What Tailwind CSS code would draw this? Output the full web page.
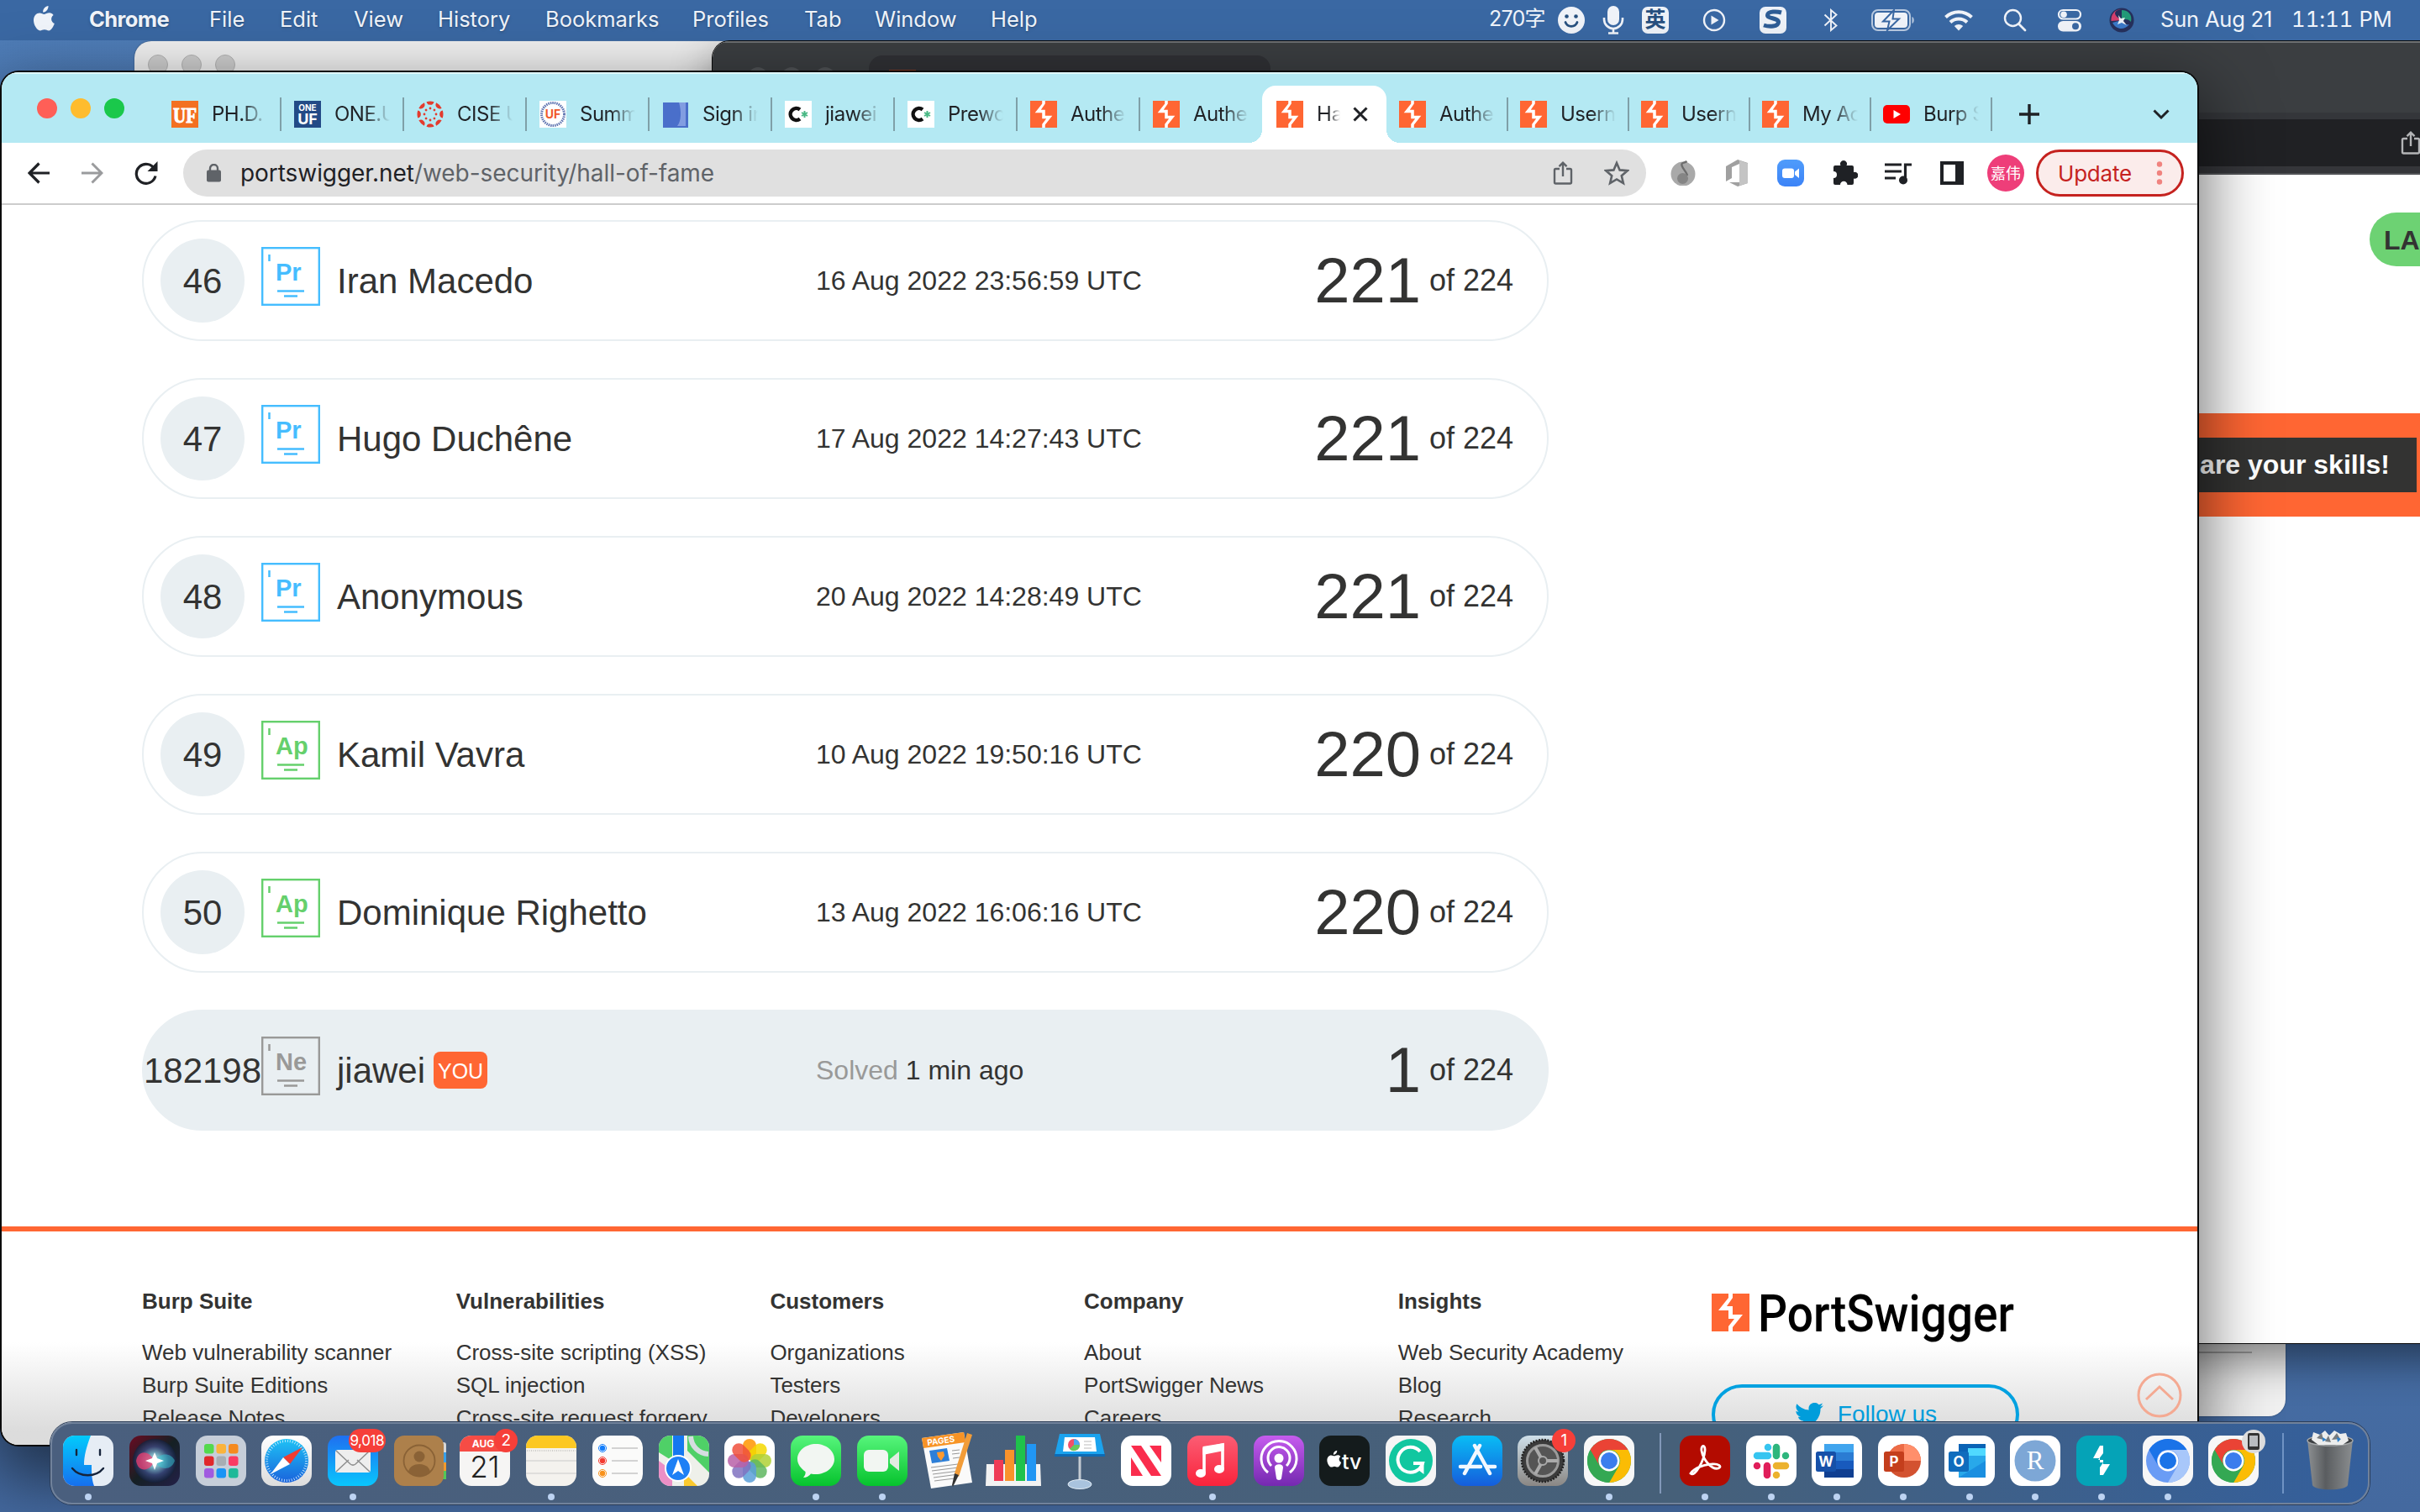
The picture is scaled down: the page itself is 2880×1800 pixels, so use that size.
<!DOCTYPE html>
<html lang="en">
<head>
<meta charset="utf-8">
<title>Hall of Fame</title>
<script src="https://cdn.jsdelivr.net/npm/@tailwindcss/browser@4"></script>
</head>
<body class="relative w-[2880px] h-[1800px] overflow-hidden bg-linear-to-b from-[#4f7db8] via-[#4a79b3] to-[#44699f] font-['Inter','Noto_Sans_CJK_SC',sans-serif]">

<svg class="absolute w-0 h-0">
  <defs>
    <linearGradient id="gBlue" x1="0" y1="0" x2="0" y2="1"><stop offset="0" stop-color="#1f6ff0"/><stop offset="1" stop-color="#09c6fd"/></linearGradient>
    <linearGradient id="gFinder" x1="0" y1="0" x2="0" y2="1"><stop offset="0" stop-color="#02cbfc"/><stop offset="1" stop-color="#1670ee"/></linearGradient>
    <linearGradient id="gGreen" x1="0" y1="0" x2="0" y2="1"><stop offset="0" stop-color="#57f57c"/><stop offset="1" stop-color="#06c32d"/></linearGradient>
    <linearGradient id="gWhite" x1="0" y1="0" x2="0" y2="1"><stop offset="0" stop-color="#ffffff"/><stop offset="1" stop-color="#dcdcdc"/></linearGradient>
    <linearGradient id="gSafari" x1="0" y1="0" x2="0" y2="1"><stop offset="0" stop-color="#1ec2f5"/><stop offset="1" stop-color="#1a63dc"/></linearGradient>
    <linearGradient id="gStore" x1="0" y1="0" x2="0" y2="1"><stop offset="0" stop-color="#09bdf5"/><stop offset="1" stop-color="#155ddc"/></linearGradient>
    <linearGradient id="gRed" x1="0" y1="0" x2="0" y2="1"><stop offset="0" stop-color="#fb5d74"/><stop offset="1" stop-color="#fa233b"/></linearGradient>
    <linearGradient id="gPurple" x1="0" y1="0" x2="0" y2="1"><stop offset="0" stop-color="#c65cee"/><stop offset="1" stop-color="#7429b0"/></linearGradient>
    <linearGradient id="gGray" x1="0" y1="0" x2="0" y2="1"><stop offset="0" stop-color="#cfe0ea"/><stop offset="1" stop-color="#8a8784"/></linearGradient>
    <linearGradient id="gZoom" x1="0" y1="0" x2="0" y2="1"><stop offset="0" stop-color="#4f9cfb"/><stop offset="1" stop-color="#3c83f7"/></linearGradient>
    <linearGradient id="gTrash" x1="0" y1="0" x2="1" y2="0"><stop offset="0" stop-color="#8d9092"/><stop offset=".4" stop-color="#5a5d60"/><stop offset="1" stop-color="#8b8e90"/></linearGradient>
    <radialGradient id="gSiri"><stop offset="0" stop-color="#ffffff"/><stop offset=".3" stop-color="#8fd5e8"/><stop offset=".65" stop-color="#3a4a80"/><stop offset="1" stop-color="#13203a"/></radialGradient>
    <linearGradient id="gSiriBg" x1="0" y1="0" x2="1" y2="1"><stop offset="0" stop-color="#6b0b22"/><stop offset=".5" stop-color="#152024"/><stop offset="1" stop-color="#232048"/></linearGradient>
    <symbol id="bolt" viewBox="0 0 45 45"><rect width="45" height="45" fill="#ff6633"/><path fill="#fff" d="M20 0h5v5l-7 10h7v10h12L25 40v5h-5v-6l7-9h-7V20H8L20 5z"/></symbol>
    <symbol id="share" viewBox="0 0 24 30"><path fill="none" stroke="currentColor" stroke-width="2.4" d="M8 10H3.500a1.500 1.500 0 0 0-1.500 1.500V26a1.500 1.500 0 0 0 1.500 1.500h17A1.500 1.500 0 0 0 22 26V11.500a1.500 1.500 0 0 0-1.500-1.500H16M12 19V3M7.500 7.200 12 2.600l4.500 4.600"/></symbol>
    <symbol id="apple" viewBox="0 0 28 34"><path fill="currentColor" d="M19.500 1c.2 2-.6 3.900-1.700 5.300-1.200 1.400-3 2.400-4.700 2.300-.2-1.900.7-3.900 1.800-5.100C16.100 2.100 18 1.100 19.500 1zM25.600 12c-3.800 2.600-3 8.300 1.200 10-1 2.900-3.600 8.400-6.700 8.400-2 0-2.700-1.200-5.200-1.200s-3.300 1.200-5.200 1.200C6.200 30.400 2 23.600 2 18.300c0-5.600 3.500-8.800 7.100-8.800 2.400 0 4 1.400 5.700 1.400 1.600 0 3.200-1.600 6.100-1.600 1.800 0 3.600.9 4.700 2.700z"/></symbol>
    <symbol id="chrome" viewBox="0 0 60 60"><rect width="60" height="60" rx="14" fill="#f7f7f7"/><circle cx="30" cy="30" r="26" fill="#34a853"/><path fill="#ea4335" d="M7.500 17A26 26 0 0 1 52.500 17H30a13 13 0 0 0-11.300 19.500z"/><path fill="#fbbc04" d="M52.500 17A26 26 0 0 1 30 56l11.300-19.500A13 13 0 0 0 30 17z"/><path fill="#34a853" d="M30 56A26 26 0 0 1 7.500 17l11.200 19.500A13 13 0 0 0 41.300 36.500z"/><circle cx="30" cy="30" r="12.500" fill="#fff"/><circle cx="30" cy="30" r="10" fill="#3b7ded"/></symbol>
  </defs>
</svg>

<!-- background window: light -->
<div class="absolute left-[160px] top-[49px] w-[2560px] h-[1637px] rounded-[20px] bg-[#f1f1f1] shadow-[0_0_2px_#0006]">
  <div class="flex gap-4 px-4 pt-4">
    <span class="size-6 rounded-full bg-[#cfcfcf] border border-[#b5b5b5]"></span>
    <span class="size-6 rounded-full bg-[#cfcfcf] border border-[#b5b5b5]"></span>
    <span class="size-6 rounded-full bg-[#cfcfcf] border border-[#b5b5b5]"></span>
  </div>
  <div class="mt-[1520px] mr-10 h-[2px] bg-[#b5b5b5]"></div>
</div>

<!-- background window: dark -->
<div class="absolute left-[848px] top-[49px] w-[2100px] h-[1550px] rounded-tl-[20px] bg-white shadow-[0_0_0_1px_#0a0a0a,0_20px_50px_#0007] overflow-hidden flex flex-col">
  <div class="h-[85px] shrink-0 bg-[#3b3e41] border-t-2 border-[#6d7073] flex gap-4 pl-[30px] pt-[29px]">
    <span class="size-6 rounded-full bg-[#505356] ml-[12px]"></span>
    <span class="size-6 rounded-full bg-[#505356]"></span>
    <span class="size-6 rounded-full bg-[#505356]"></span>
    <div class="-mt-[14px] ml-[24px] w-[478px] h-20 rounded-t-[16px] bg-[#303135] pl-[24px] pt-[17px]"><div class="size-8 bg-[#8a3c22]"></div></div>
  </div>
  <div class="h-2 shrink-0 bg-[#34363a]"></div>
  <div class="h-[56px] shrink-0 bg-[#202124] flex items-center justify-end pr-[67px] text-[#b4b5b7]"><svg class="w-6 h-[30px]"><use href="#share"/></svg></div>
  <div class="h-2 shrink-0 bg-[#35363a]"></div>
  <div class="h-[2px] shrink-0 bg-[#505255]"></div>
  <div class="mt-[45px] ml-[1972px] w-[200px] h-16 shrink-0 rounded-[32px] bg-[#6dd273] pl-[17px] font-['Liberation_Sans',sans-serif] font-bold text-[32px] leading-[66px] text-[#333332]">LA</div>
  <div class="mt-[175px] h-[123px] shrink-0 bg-[#ff6633] py-[29px] pr-[72px]">
    <div class="h-[65px] bg-[#333332] text-white text-right pr-[32px] font-['Liberation_Sans',sans-serif] font-bold text-[32px] leading-[64px]">are your skills!</div>
  </div>
</div>

<!-- menu bar -->
<header class="absolute inset-x-0 top-0 h-12 bg-[#3a68a3] text-[#f0f4fa] text-[25.500px] flex items-center">
  <div class="flex items-center pl-[38px] h-12 -mt-[2px] whitespace-nowrap text-shadow-md">
    <svg class="w-[28px] h-[34px] mr-10"><use href="#apple"/></svg>
    <span class="w-[143px] font-bold tracking-[-0.600px]">Chrome</span>
    <span class="w-[84px]">File</span>
    <span class="w-[88px]">Edit</span>
    <span class="w-[100px]">View</span>
    <span class="w-[128px]">History</span>
    <span class="w-[175px]">Bookmarks</span>
    <span class="w-[133px]">Profiles</span>
    <span class="w-[84px]">Tab</span>
    <span class="w-[138px]">Window</span>
    <span>Help</span>
  </div>
  <div class="ml-auto flex items-center h-12 pr-[34px] whitespace-nowrap">
    <span class="w-[82px] tracking-[-0.800px] text-[25px] -mt-[2px]">270字</span>
    <svg class="size-8" viewBox="0 0 32 32"><circle cx="16" cy="16" r="16" fill="#f0f3f9"/><circle cx="10.500" cy="11.500" r="2.300" fill="#27507f"/><circle cx="21.500" cy="11.500" r="2.300" fill="#27507f"/><path d="M9 18.500a7.500 7.500 0 0 0 14 0" fill="none" stroke="#27507f" stroke-width="2.800" stroke-linecap="round"/></svg>
    <svg class="ml-5 w-7 h-[34px]" viewBox="0 0 28 34"><rect x="7" y="0" width="14" height="23" rx="7" fill="#f0f3f9"/><path d="M3 14v2a11 11 0 0 0 22 0v-2M14 27v5M8 32.500h12" fill="none" stroke="#f0f3f9" stroke-width="2.600"/></svg>
    <span class="ml-5 size-8 rounded-[7px] bg-[#eef2f8] text-[#27507f] text-[25px] leading-[31px] text-center font-bold">英</span>
    <svg class="ml-10 size-7" viewBox="0 0 28 28"><circle cx="14" cy="14" r="12" fill="none" stroke="#f0f3f9" stroke-width="2.400"/><path d="m10.500 8.500 9 5.500-9 5.500z" fill="#f0f3f9"/></svg>
    <span class="ml-10 size-8 rounded-[7px] bg-[#eef2f8] flex items-center justify-center"><svg class="size-7" viewBox="0 0 28 28"><path d="M24 5c-5-1.500-16-2-16.500 3-.5 4.500 13.500 3 13 8.500-.5 5-10 6-17.500 3.500" fill="none" stroke="#2e5d96" stroke-width="5"/></svg></span>
    <svg class="ml-[43px] w-5 h-7" viewBox="0 0 20 28"><path d="m2.500 7.500 14 13L10 26V2l6.500 5.500-14 13" fill="none" stroke="#f0f3f9" stroke-width="1.900"/></svg>
    <svg class="ml-[38px] w-[52px] h-[26px]" viewBox="0 0 52 26"><rect x="1" y="1" width="45" height="24" rx="7" fill="none" stroke="#b8c9e0" stroke-width="2"/><rect x="4" y="4" width="39" height="18" rx="4" fill="#f0f3f9"/><path d="M48.500 9v8c3-1 3-7 0-8z" fill="#b8c9e0"/><path d="M27 1 14 14.500h7.500L19 25l14-13.500h-7.500z" fill="#f0f3f9" stroke="#3a68a3" stroke-width="2"/></svg>
    <svg class="ml-[34px] w-9 h-[26px]" viewBox="0 0 36 26"><path d="M2.500 9.500a22.500 22.500 0 0 1 31 0M8 15.500a14.500 14.500 0 0 1 20 0" fill="none" stroke="#f0f3f9" stroke-width="4"/><path d="M18 25.500 12.800 20a7.500 7.500 0 0 1 10.400 0z" fill="#f0f3f9"/></svg>
    <svg class="ml-[35px] size-7" viewBox="0 0 28 28"><circle cx="11.500" cy="11.500" r="9.500" fill="none" stroke="#f0f3f9" stroke-width="2.400"/><path d="m18.500 18.500 7.500 7.500" stroke="#f0f3f9" stroke-width="2.800" stroke-linecap="round"/></svg>
    <svg class="ml-9 w-[30px] h-7" viewBox="0 0 30 28"><rect x="2" y="2" width="26" height="10.500" rx="5.200" fill="none" stroke="#f0f3f9" stroke-width="2.200"/><circle cx="8" cy="7.200" r="3.800" fill="#f0f3f9"/><rect x="1" y="15" width="28" height="12.500" rx="6.200" fill="#f0f3f9"/><circle cx="22" cy="21.200" r="4" fill="#3a68a3"/></svg>
    <svg class="ml-8 size-[30px]" viewBox="0 0 30 30"><circle cx="15" cy="15" r="14.500" fill="#26305c"/><path d="M15 15C3 8 6 3 15 2c-9 0-13 7-12.500 14z" fill="#d23f6d"/><path d="M15 3c8 0 13 6 11 14-4-4-8-3-11-2z" fill="#239a78"/><path d="M4 18c4 8 14 10 20 2-6 2-9-5-9-5z" fill="#3a78c8"/><path d="m11 9 3 4 5-1-2 4 4 5-6-3-5 2 2-5z" fill="#fff" opacity=".9"/></svg>
    <span class="ml-[31px] w-[156px] -mt-[2px] tracking-[-0.200px]">Sun Aug 21</span>
    <span class="w-[119px] -mt-[2px] tabular-nums tracking-[0.100px]">11:11 PM</span>
  </div>
</header>

<!-- browser window -->
<main class="absolute left-[2px] top-[86px] w-[2613px] h-[1634px] rounded-[20px] bg-white overflow-hidden flex flex-col shadow-[0_0_0_2px_#0b0b0b,0_30px_80px_10px_rgba(0,0,0,.55)]">
  <!-- tab strip -->
  <div class="h-[84px] shrink-0 bg-[#b4e9f3] border-t-2 border-[#dff8fc] flex items-end">
    <div class="flex gap-4 pl-[42px] w-[187px] mb-[29px]">
      <span class="size-6 rounded-full bg-[#ff5f57]"></span>
      <span class="size-6 rounded-full bg-[#febc2e]"></span>
      <span class="size-6 rounded-full bg-[#1ac84b]"></span>
    </div>
    <nav id="tabs" class="flex items-end text-[24px] text-[#1f2125]"></nav>
    <svg class="ml-[32px] mb-[22px] size-6" viewBox="0 0 24 24"><path d="M12 0v24M0 12h24" stroke="#1f2125" stroke-width="3.400"/></svg>
    <svg class="ml-[135px] mb-[27px] w-5 h-[14px]" viewBox="0 0 20 14"><path d="m1.500 2.500 8.500 8.500 8.500-8.500" fill="none" stroke="#1f2125" stroke-width="3"/></svg>
  </div>
  <!-- toolbar -->
  <div class="h-[74px] shrink-0 border-b-2 border-[#cccccc] flex items-center text-[#1f2125]">
    <svg class="ml-[31px] size-[26px]" viewBox="0 0 26 26"><path d="M26 13H3M13.500 1.500 2 13l11.500 11.500" fill="none" stroke="#1f2125" stroke-width="3.200"/></svg>
    <svg class="ml-[38px] size-[26px]" viewBox="0 0 26 26"><path d="M0 13h23M12.500 1.500 24 13 12.500 24.500" fill="none" stroke="#9a9b9d" stroke-width="3"/></svg>
    <svg class="ml-[37px] size-7" viewBox="0 0 28 28"><path d="M24 9.500A11.500 11.500 0 1 0 25 17.500" fill="none" stroke="#1f2125" stroke-width="3.200"/><path d="M27.500 0v12h-12z" fill="#1f2125"/></svg>
    <div class="ml-[30px] w-[1741px] h-14 rounded-full bg-[#e0e0e0] flex items-center pl-[28px] pr-5 text-[#5f6368]">
      <svg class="w-[17px] h-[22px]" viewBox="0 0 17 22"><rect y="7.500" width="17" height="14" rx="2" fill="#5f6368"/><path d="M4 9V5.500a4.500 4.500 0 0 1 9 0V9" fill="none" stroke="#5f6368" stroke-width="2.400"/></svg>
      <span class="ml-[23px] text-[28px] tracking-[-0.060px] leading-[56px] whitespace-nowrap"><span class="text-[#1f2125]">portswigger.net</span>/web-security/hall-of-fame</span>
      <svg class="ml-auto w-6 h-[30px]"><use href="#share"/></svg>
      <svg class="ml-[37px] size-[30px]" viewBox="0 0 30 30"><path d="m15 3 3.600 8.400 9.100.8-6.900 6 2.100 8.900L15 22.400l-7.900 4.700 2.100-8.900-6.900-6 9.100-.8z" fill="none" stroke="#5f6368" stroke-width="2.600"/></svg>
    </div>
    <svg class="ml-[29px] size-[30px]" viewBox="0 0 30 30"><circle cx="15" cy="16" r="14.500" fill="#a9a9a9"/><path d="M19.500 1c-3 2.500-7 1-6 5 1 4 6 8 6.500 12" fill="none" stroke="#6d6d6d" stroke-width="2.400"/><circle cx="14.500" cy="21.500" r="6.500" fill="#858585"/></svg>
    <svg class="ml-[36px] w-[26px] h-8" viewBox="0 0 26 32"><path d="M0 8 14 0l12 4v24l-12 4-10-5h12V5L7 9v13l-7 4z" fill="#a0a0a0"/><path d="m16 1 10 3.500V28l-10 3z" fill="#c4c4c4"/></svg>
    <svg class="ml-[35px] size-8" viewBox="0 0 32 32"><rect width="32" height="32" rx="9" fill="url(#gZoom)"/><rect x="6" y="10.500" width="14" height="11.500" rx="3" fill="#fff"/><path d="m21 14.500 5-4v11.500l-5-4z" fill="#fff"/></svg>
    <svg class="ml-[34px] size-[30px]" viewBox="0 0 30 30"><path fill="#1f2125" d="M1 8a2 2 0 0 1 2-2h6.500a4 4 0 1 1 7 0H23a2 2 0 0 1 2 2v6a4 4 0 1 1 0 7.500V27a2 2 0 0 1-2 2h-5.500a4.200 4.200 0 0 0-8.500 0H3a2 2 0 0 1-2-2v-6a4 4 0 0 0 0-8z"/></svg>
    <svg class="ml-8 w-8 h-7" viewBox="0 0 32 28"><path d="M0 4h20M0 12h20M0 20h13M24.500 22V4H32" fill="none" stroke="#1f2125" stroke-width="3.200"/><circle cx="22" cy="22.500" r="5" fill="#1f2125"/></svg>
    <svg class="ml-[34px] size-7" viewBox="0 0 28 28"><path fill="#1f2125" fill-rule="evenodd" d="M0 0h28v28H0zM4 4v20h14V4z"/></svg>
    <span class="ml-7 size-11 rounded-full bg-[#ee3e79] text-white text-[18px] leading-[43px] text-center font-['Noto_Sans_CJK_SC',sans-serif]">嘉伟</span>
    <div class="ml-[14px] w-[176px] h-14 rounded-full border-3 border-[#c5221f] bg-[#fbeceb] flex items-center pl-[23px] text-[#c5221f]">
      <span class="text-[26px] tracking-[-0.200px]">Update</span>
      <svg class="ml-[29px] w-2 h-7" viewBox="0 0 8 28"><circle cx="4" cy="3.500" r="3.200" fill="#f0837f"/><circle cx="4" cy="14" r="3.200" fill="#f0837f"/><circle cx="4" cy="24.500" r="3.200" fill="#f0837f"/></svg>
    </div>
  </div>
  <!-- page -->
  <section id="rows" class="pt-[18px] pl-[167px] flex flex-col gap-11 shrink-0 font-['Liberation_Sans',sans-serif] text-[#333332]"></section>
  <footer class="mt-[114px] h-[270px] shrink-0 border-t-6 border-[#ff6633] bg-linear-to-b from-white from-50% to-[#dcdcdc] to-90% pt-[64px] pl-[167px] flex relative font-['Liberation_Sans',sans-serif] text-[26px] text-[#333332]">
    <div id="links" class="flex"></div>
    <div>
      <svg class="mt-[10px] w-[366px] h-[66px]" viewBox="0 0 366 66"><use href="#bolt" width="45" height="45"/><text x="55" y="45" textLength="305" lengthAdjust="spacingAndGlyphs" font-family="Roboto, sans-serif" font-weight="500" font-size="62" fill="#000">PortSwigger</text></svg>
      <div class="mt-[42px] w-[366px] h-[72px] rounded-[36px] border-4 border-[#00a1e0] text-[#009ddb] text-[28px] flex items-center justify-center gap-[17px]">
        <svg class="w-[34px] h-7" viewBox="0 0 34 28"><path fill="currentColor" d="M34 3.300a14 14 0 0 1-4 1.100 7 7 0 0 0 3-3.900 14 14 0 0 1-4.400 1.700 7 7 0 0 0-11.900 6.400A20 20 0 0 1 2.400 1.300a7 7 0 0 0 2.200 9.300 7 7 0 0 1-3.200-.9c0 3.500 2.400 6.200 5.600 6.900a7 7 0 0 1-3.100.1 7 7 0 0 0 6.500 4.900A14 14 0 0 1 0 24.500 20 20 0 0 0 10.700 27.600c13 0 20.200-10.900 19.800-20.700A14 14 0 0 0 34 3.300z"/></svg>
        <span>Follow us</span>
      </div>
    </div>
    <svg class="absolute left-[2540px] top-[167px] size-14" viewBox="0 0 56 56"><circle cx="28" cy="28" r="25" fill="none" stroke="#f4a992" stroke-width="3"/><path d="m12 33 16-15 16 15" fill="none" stroke="#f4a992" stroke-width="3"/></svg>
  </footer>
</main>

<!-- dock -->
<div class="absolute left-[60px] top-[1693px] w-[2760px] h-[98px] rounded-[26px] border-2 border-[#71829b] shadow-[0_0_0_1px_#2b3d58] bg-linear-to-r from-[#4a5f7e] via-[#466079] via-70% to-[#345f9c] flex items-start pt-[14px] pl-[4px]">
  <div id="dock" class="flex"></div>
  <div class="ml-[20px] -mt-[3px] w-[2px] h-[72px] shrink-0 bg-[#8298b8]"></div>
  <div id="dock2" class="flex ml-[13px]"></div>
  <div class="ml-[18px] -mt-[3px] w-[2px] h-[72px] shrink-0 bg-[#6f93c4]"></div>
  <svg class="ml-[27px] -mt-[7px] w-[56px] h-[72px] shrink-0" viewBox="0 0 56 72"><path d="M1 12h54l-6 54c-2 7-40 7-42 0z" fill="url(#gTrash)"/><ellipse cx="28" cy="13" rx="27" ry="6" fill="#3d4043" stroke="#a4a7a9" stroke-width="1.500"/><path d="m6 12 2-9 8 3 6-5 5 6 6-6 7 4 7-1 3 9-7 5H14z" fill="#eceded"/><path d="m12 10 6-6 2 8zM30 12l6-8 4 7zM22 14l4-7 3 8z" fill="#777b7e"/><path d="m36 9 5 2-4 4zM19 9l5 3-5 2z" fill="#2f80c8"/></svg>
</div>

<script>
const use = (id, cls) => `<svg class="${cls}"><use href="#${id}"/></svg>`;
const bolt = use('bolt', 'size-8 shrink-0');
const fav = inner => `<svg class="size-8 shrink-0" viewBox="0 0 32 32">${inner}</svg>`;
const txt = (x, y, s, fill, t, extra = '') => `<text x="${x}" y="${y}" font-size="${s}" fill="${fill}" text-anchor="middle" font-weight="700" ${extra}>${t}</text>`;
const canvasPath = Array.from({length: 8}, (_, i) => `<g transform="rotate(${i * 45} 16 16)"><path d="M11.500 1.200a15.500 15.500 0 0 1 9 0a4.600 4.600 0 0 1-9 0z" fill="#e33b2e"/><circle cx="16" cy="9" r="1.400" fill="#e33b2e"/></g>`).join('');
const cIcon = fav(`<rect width="32" height="32" fill="#fff"/><path d="M18 10.500a7 7 0 1 0 0 11" fill="none" stroke="#111" stroke-width="4.500"/><path d="M23.500 12v8M20 14l7 4M27 14l-7 4" stroke="#49b884" stroke-width="2"/>`);
const tabs = [
  [fav(`<rect width="32" height="32" fill="#f37021"/>${txt(16, 26, 26, '#fff', 'UF', 'font-family="Liberation Serif" textLength="28" lengthAdjust="spacingAndGlyphs" stroke="#fff" stroke-width="1"')}`), 'PH.D.'],
  [fav(`<rect width="32" height="32" fill="#234a86"/>${txt(16, 12, 10, '#fff', 'ONE')}${txt(16, 28, 18, '#fff', 'UF')}`), 'ONE.U'],
  [fav(canvasPath), 'CISE U'],
  [fav(`<rect width="32" height="32" fill="#fff"/><circle cx="16" cy="16" r="13.500" fill="none" stroke="#5a70ae" stroke-width="3" stroke-dasharray="1.500 1"/>${txt(16, 21, 14, '#f0592a', 'UF')}`), 'Summer'],
  [fav(`<rect x="1" y="2" width="30" height="30" fill="#4a6fca"/><path d="M20 2h8v28H18c5-6 5-18 2-28z" fill="#a9bdf0" opacity=".6"/>`), 'Sign in'],
  [cIcon, 'jiawei'], [cIcon, 'Prewor'], [bolt, 'Authen'], [bolt, 'Authen'], [bolt, 'Hall'],
  [bolt, 'Authen'], [bolt, 'Userna'], [bolt, 'Userna'], [bolt, 'My Acc'],
  [fav('<rect y="5" width="32" height="22" rx="5" fill="#f00"/><path d="m12.500 11 8.500 5-8.500 5z" fill="#fff"/>'), 'Burp Su'],
];
document.getElementById('tabs').innerHTML = tabs.map(([icon, label], i) => {
  const text = `<span class="ml-4 w-[66px] overflow-hidden whitespace-nowrap tracking-[-0.500px] leading-8 mask-r-from-55% mask-r-to-100%">${label}</span>`;
  if (i === 9) return `<div class="relative w-[148px] h-[68px] -ml-px mr-px rounded-t-[16px] bg-white flex items-center pl-[17px] before:absolute before:-left-4 before:bottom-0 before:size-4 before:bg-radial-[at_0%_0%] before:from-transparent before:from-[16px] before:to-white before:to-[16px] after:absolute after:-right-4 after:bottom-0 after:size-4 after:bg-radial-[at_100%_0%] after:from-transparent after:from-[16px] after:to-white after:to-[16px]">${icon}<span class="ml-4 w-7 overflow-hidden whitespace-nowrap mask-r-from-50% mask-r-to-100%">${label}</span><svg class="ml-[15px] size-[18px]" viewBox="0 0 18 18"><path d="m1.500 1.500 15 15M16.500 1.500l-15 15" stroke="#1f2125" stroke-width="3"/></svg></div>`;
  if (i > 9) return `<div class="w-[144px] h-[68px] flex items-center pl-[14px]">${icon}${text}<span class="ml-auto w-[2px] h-10 bg-[#7fa0a8]"></span></div>`;
  return `<div class="w-[146px] h-[68px] flex items-center pl-[15px]">${icon}${text}<span class="ml-auto w-[2px] h-10 ${i === 8 ? 'bg-transparent' : 'bg-[#7fa0a8]'}"></span></div>`;
}).join('');

const badge = (color, t) => `<svg class="size-[70px] shrink-0 mb-[10px]" viewBox="0 0 70 70"><rect x="1.200" y="1.200" width="67.600" height="67.600" fill="none" stroke="${color}" stroke-width="2.400"/><path d="M9.500 9v8M19 52.500h32M27 58.500h16" stroke="${color}" stroke-width="2.500"/><text x="17" y="40" font-size="29" font-weight="700" fill="${color}">${t}</text></svg>`;
const rows = [
  [46, 'Pr', 'Iran Macedo', '16 Aug 2022 23:56:59 UTC', 221],
  [47, 'Pr', 'Hugo Duchêne', '17 Aug 2022 14:27:43 UTC', 221],
  [48, 'Pr', 'Anonymous', '20 Aug 2022 14:28:49 UTC', 221],
  [49, 'Ap', 'Kamil Vavra', '10 Aug 2022 19:50:16 UTC', 220],
  [50, 'Ap', 'Dominique Righetto', '13 Aug 2022 16:06:16 UTC', 220],
  [182198, 'Ne', 'jiawei', '1 min ago', 1],
];
const colors = {Pr: '#45bdff', Ap: '#65d06c', Ne: '#999998'};
document.getElementById('rows').innerHTML = rows.map(([rank, lvl, name, date, score]) => {
  const me = rank > 50;
  return `<div class="w-[1674px] h-36 rounded-full border-2 border-[#e9eff2] ${me ? 'bg-[#e9eff2]' : 'bg-white'} flex items-center pr-[38px] whitespace-nowrap">
    <div class="ml-5 size-[100px] shrink-0 rounded-full bg-[#e9eff2] text-[42px] flex items-center justify-center">${rank}</div>
    <div class="ml-5 flex items-center">${badge(colors[lvl], lvl)}</div>
    <div class="ml-5 w-[570px] text-[42px] flex items-center">${name}${me ? '<span class="ml-[10px] h-11 w-16 rounded-lg bg-[#ff6633] text-white text-[25px] leading-[46px] text-center">YOU</span>' : ''}</div>
    <div class="text-[32px]">${me ? '<span class="text-[#999998]">Solved</span> ' : ''}${date}</div>
    <div class="ml-auto flex items-center"><span class="text-[76px] leading-[100px]">${score}</span><span class="ml-[10px] w-[102px] text-[36px]">of 224</span></div>
  </div>`;
}).join('');

const cols = [
  ['Burp Suite', 'Web vulnerability scanner', 'Burp Suite Editions', 'Release Notes'],
  ['Vulnerabilities', 'Cross-site scripting (XSS)', 'SQL injection', 'Cross-site request forgery'],
  ['Customers', 'Organizations', 'Testers', 'Developers'],
  ['Company', 'About', 'PortSwigger News', 'Careers'],
  ['Insights', 'Web Security Academy', 'Blog', 'Research'],
];
document.getElementById('links').innerHTML = cols.map(([h, ...l]) =>
  `<div class="w-[373.700px] leading-[39px]"><div class="font-bold mb-[22px]">${h}</div>${l.map(t => `<div>${t}</div>`).join('')}</div>`).join('');

const sq = fill => `<rect width="60" height="60" rx="14" fill="${fill}"/>`;
const petals = ['#ff9500', '#f5d800', '#b0d136', '#5fb760', '#5a9fd8', '#8072c0', '#b860a8', '#f0503c'].map((c, i) => `<rect x="22" y="4" width="16" height="25" rx="8" fill="${c}" opacity=".85" transform="rotate(${i * 45} 30 30)"/>`).join('');
const pad = ['#53d94d', '#fab33c', '#f58a1f', '#e0282c', '#a7adb3', '#fb3b63', '#a05be0', '#1a94f5', '#1fb999'].map((c, i) => `<rect x="${10 + i % 3 * 14.5}" y="${10 + Math.floor(i / 3) * 14.5}" width="11.500" height="11.500" rx="3" fill="${c}"/>`).join('');
const doc = (x, c, l) => `<rect x="${x}" y="19" width="24" height="24" rx="2.500" fill="${c}"/>${txt(x + 12, 37, 17, '#fff', l)}`;
const apps = [
  [sq('#e6edf5') + '<path d="M14 0h19c-5 13-8 24-8 35h9c0 9 0 17 3 25H14A14 14 0 0 1 0 46V14A14 14 0 0 1 14 0z" fill="url(#gFinder)"/><path d="M16 17v6M44 17v6M11 39c9 11 28 11 37 0" fill="none" stroke="#16243b" stroke-width="2.400" stroke-linecap="round"/>', 1],
  [sq('url(#gSiriBg)') + '<circle cx="30" cy="30" r="26" fill="url(#gSiri)" opacity=".8"/><path d="M8 30c2-12 14-14 22 0-6 14-20 14-22 0z" fill="#ef3f72" opacity=".75"/><path d="M30 30c6-10 20-10 24 0-4 12-18 12-24 0z" fill="#32c8d6" opacity=".5"/><path d="M30 20l3 7 8 3-8 3-3 8-3-8-8-3 8-3z" fill="#fff"/>'],
  [sq('#c6ced9') + pad],
  [sq('url(#gWhite)') + '<circle cx="30" cy="30" r="26" fill="url(#gSafari)"/><circle cx="30" cy="30" r="23.500" fill="none" stroke="#d8f0ff" stroke-width="3" stroke-dasharray=".8 2.200"/><path d="M49 14 34 34l-8-8z" fill="#f23c30"/><path d="M11 46 26 26l8 8z" fill="#fff"/>'],
  [sq('url(#gBlue)') + '<rect x="9" y="17" width="42" height="27" rx="3" fill="#eee"/><path d="m10 43 15-14M50 43 35 29M10 18l17 16c2 1.500 4 1.500 6 0l17-16" fill="none" stroke="#8e8e8e" stroke-width="1.500"/>', 1, '9,018'],
  ['<rect x="50" y="8" width="12" height="44" rx="3" fill="#d8d8d8"/><rect x="52" y="20" width="10" height="12" fill="#3aa0e8"/><rect x="52" y="32" width="10" height="10" fill="#f29a2e"/><rect x="52" y="42" width="10" height="10" fill="#54c858"/><rect width="59" height="60" rx="12" fill="#ad804b"/><circle cx="30" cy="30" r="18.500" fill="none" stroke="#8a6236" stroke-width="1.800"/><circle cx="30" cy="25" r="6.500" fill="#8a6236"/><path d="M17 43c2-12 24-12 26 0-7 7-19 7-26 0z" fill="#8a6236"/>'],
  [sq('#f6f5f4') + '<path d="M0 19v-5A14 14 0 0 1 14 0h32a14 14 0 0 1 14 14v5z" fill="#f64c45"/>' + txt(28, 14, 12, '#fff', 'AUG') + '<text x="30" y="50" font-size="35" fill="#222" text-anchor="middle" font-weight="300">21</text>', 0, '2'],
  [sq('#f4f2ee') + '<path d="M0 15v-1A14 14 0 0 1 14 0h32a14 14 0 0 1 14 14v1z" fill="#fcc823"/><path d="M0 30h60M0 45h60" stroke="#d8d8d6" stroke-width="1.500"/><path d="M1 18h58" stroke="#c0c0be" stroke-width="1.500" stroke-dasharray="1 1.500"/>', 1],
  [sq('#fbfbfa') + [['#147efb', 15], ['#f33a30', 30], ['#f8921c', 45]].map(([c, y]) => `<circle cx="12" cy="${y}" r="4.500" fill="#fff" stroke="${c}" stroke-width="1"/><circle cx="12" cy="${y}" r="3.200" fill="${c}"/><path d="M23 ${y}h31" stroke="#c6c6c6" stroke-width="1.500"/>`).join('')],
  [sq('#eef0ea') + '<path d="M14 0h2v30L0 20v-6A14 14 0 0 1 14 0zM34 0h12a14 14 0 0 1 14 14v30L34 18z" fill="#4fd067"/><path d="M0 30 16 42v18h-2A14 14 0 0 1 0 46z" fill="#ec8fc6"/><path d="M30 60V44l16 16z" fill="#fbc92e"/><path d="M17 0h13v30H17z" fill="#1478f0"/><path d="M59 22A22 22 0 0 1 38 1" fill="none" stroke="#d6dde0" stroke-width="6"/><circle cx="23" cy="39" r="15" fill="#1e80f5" stroke="#fff" stroke-width="2"/><path d="m23 28 7 19-7-5-7 5z" fill="#fff"/>'],
  [sq('#fff') + petals],
  [sq('url(#gGreen)') + '<path d="M30 10c12 0 22 8 22 18s-10 18-22 18c-2 0-4 0-6-.6C22 48 19 50 15 50c2-2 3-5 2.500-7C12 39 8 34 8 28c0-10 10-18 22-18z" fill="#f2f6f2"/>', 1],
  [sq('url(#gGreen)') + '<rect x="8" y="17" width="29" height="26" rx="6" fill="#f2f6f2"/><path d="m39 28 11-9v23l-11-9z" fill="#e2ebe2"/>', 1],
  ['<path d="m-1 3 50-7 10 60-49 7z" fill="#fafafa"/><path d="m-1 3 50-7 2 12-50 7z" fill="#f79325"/><text x="6" y="12" font-size="10" font-weight="700" fill="#fff" transform="rotate(-8 6 12)">PAGES</text><path d="m8 18 21-3 3 15-21 3z" fill="#2d7fd8"/><path d="m17 20 8-1 1 5-4 6-4-5z" fill="#ff9a2e"/><path d="m10 38 32-4M11 42l32-4M12 46l32-4M13 50l30-4M14 54l24-3M35 18l9-1M35 22l9-1M36 27l8-1" stroke="#9a9a9a" stroke-width="1.200"/><path d="m53-3 6 2-16 50-5-4z" fill="#f29c38"/><path d="m38 45 5 2-7 14-1-2z" fill="#333"/>'],
  ['<path d="M-3 34h64l1 26H-4z" fill="#f2f2f2"/><rect x="6" y="29" width="11" height="25" fill="#ef3b55"/><rect x="19" y="17" width="11" height="37" fill="#f9932b"/><rect x="32" y="0" width="11" height="54" fill="#1fc24b"/><rect x="45" y="10" width="11" height="44" fill="#2196f3"/>'],
  ['<path d="M5-2h48l6 26H-1z" fill="#1ba3ee"/><path d="M-1 22h60v3H-1z" fill="#0d6bb5"/><path d="M11 2h36l2 17H9z" fill="#fff"/><circle cx="22" cy="11" r="7" fill="#f0506a"/><path d="M22 11V4a7 7 0 0 1 7 7z" fill="#4aa8f0"/><path d="M22 11h7a7 7 0 0 1-12 5z" fill="#63c95f"/><path d="M34 7h9M34 11h9M34 15h9" stroke="#bbb"/><path d="M29 25v32" stroke="#c4cbd2" stroke-width="3"/><ellipse cx="29" cy="58" rx="14" ry="5.500" fill="#a9c3de" stroke="#e2ecf5"/>'],
  [sq('#fff') + '<path d="M12 12h12l24 36H36z" fill="#fa2d4d"/><path d="M12 26v22h14zM34 12h14v20z" fill="#fa2d4d"/>'],
  [sq('url(#gRed)') + '<path d="M20 44V16l22-5v29" fill="none" stroke="#fff" stroke-width="3.600"/><path d="m18.500 13 25-4v9l-25 5z" fill="#fff"/><ellipse cx="16" cy="45" rx="6" ry="5" fill="#fff"/><ellipse cx="38" cy="40" rx="6" ry="5" fill="#fff"/>', 1],
  [sq('url(#gPurple)') + '<circle cx="30" cy="27" r="5.500" fill="#fff"/><path d="M25 38c0-5 10-5 10 0l-2 13c-.5 2.500-5.500 2.500-6 0z" fill="#fff"/><path d="M21 36a13 13 0 1 1 18 0M17 44a21 21 0 1 1 26 0" fill="none" stroke="#fff" stroke-width="3"/>'],
  [sq('#141b1c') + '<use href="#apple" x="8" y="17" width="19" height="23" color="#fff"/><text x="27" y="40" font-size="25" font-weight="500" fill="#fff">tv</text>'],
  [sq('#f5f5f5') + '<circle cx="30" cy="30" r="26" fill="#11c7a0"/><path d="M41 19a15 15 0 1 0 3 14H33" fill="none" stroke="#fff" stroke-width="4"/><path d="M44 33v10l-5-4" fill="none" stroke="#fff" stroke-width="3"/>'],
  [sq('url(#gStore)') + '<path d="m33 12-18 33M27 12l18 33M10 37h24M42 37h9" fill="none" stroke="#f2f8ff" stroke-width="4.500" stroke-linecap="round"/>'],
  [sq('url(#gGray)') + '<circle cx="30" cy="30" r="25" fill="#3b3b3b" stroke="#222" stroke-width="2.500" stroke-dasharray="2 1.500"/><circle cx="30" cy="30" r="18.500" fill="#555" stroke="#9a9a9a" stroke-width="3"/><path d="M30 30h18M30 30l-9-16M30 30l-9 16" stroke="#aaa" stroke-width="4"/><circle cx="30" cy="30" r="5" fill="#555" stroke="#aaa" stroke-width="2"/>', 0, '1'],
  ['<use href="#chrome"/>', 1],
];
const apps2 = [
  [sq('#b30b00') + '<path d="M13 45c5 5 16-15 17-27 .6-8-5-7-4 0 2 11 12 23 20 21 5-2 0-6-8-5-9 .6-20 4-25 11z" fill="none" stroke="#fff" stroke-width="2.800"/>', 1],
  [sq('#fff') + '<g stroke-width="8.500" stroke-linecap="round"><path d="M13 24h13M26 14h.01" stroke="#36c5f0"/><path d="M36 14v10M47 24h.01" stroke="#2eb67d"/><path d="M36 36h11M36 47h.01" stroke="#ecb22e"/><path d="M25 36v11M13 36h.01" stroke="#e01e5a"/></g>', 1],
  [sq('#fff') + '<path d="M15 10h35v10H15z" fill="#41a5ee"/><path d="M15 20h35v10H15z" fill="#2b7cd3"/><path d="M15 30h35v10H15z" fill="#185abd"/><path d="M15 40h35v10H15z" fill="#103f91"/>' + doc(5, '#1650a8', 'W'), 1],
  [sq('#fff') + '<circle cx="31" cy="30" r="20" fill="#d35230"/><path d="M31 10a20 20 0 0 1 20 20H31z" fill="#ff8f6b"/><path d="M31 10v20H11a20 20 0 0 1 20-20z" fill="#ed6c47"/>' + doc(7, '#c43e1c', 'P'), 1],
  [sq('#fff') + '<path d="M17 10h32v18H17z" fill="#0a63b5"/><path d="M28 15h21v13H28z" fill="#50d9ff"/><path d="M17 24h32v26H17z" fill="#28a8ea"/><path d="M17 50 49 30v20z" fill="#1a8fe0"/>' + doc(5, '#0f6cbd', 'O'), 1],
  [sq('#fff') + '<circle cx="30" cy="30" r="24.500" fill="#7da7d6"/><text x="30" y="40" font-size="31" font-family="Liberation Serif, serif" fill="#fff" text-anchor="middle">R</text>', 1],
  [sq('#05a3b7') + '<path d="M28 12h4v9l-6 8h6v5h8l-8 13h-4v-9l4-6h-4v-5h-8z" fill="#fff"/>', 1],
  [sq('#f7f7f7') + '<circle cx="30" cy="30" r="26" fill="#6a9cf5"/><path d="M7.500 17A26 26 0 0 1 52.500 17H30a13 13 0 0 0-11.300 19.500z" fill="#1a73e8"/><path d="M52.500 17A26 26 0 0 1 30 56l11.300-19.500A13 13 0 0 0 30 17z" fill="#a8c7fa"/><circle cx="30" cy="30" r="12.500" fill="#fff"/><circle cx="30" cy="30" r="10" fill="#1a73e8"/>', 1],
  ['<use href="#chrome" width="60" height="60"/><circle cx="54" cy="7" r="14" fill="#dcdcdc"/><rect x="47" y="-3" width="14" height="20" rx="2" fill="#333"/><rect x="49" y="0" width="10" height="13" fill="#b9bcc0"/>'],
];
const cell = ([art, run, n]) => `<div class="relative w-[78.700px] shrink-0 flex flex-col items-center">
  <svg class="size-[60px] overflow-visible" viewBox="0 0 60 60">${art}</svg>
  ${run ? '<span class="mt-[9px] size-2 rounded-full bg-[#bdd3f2]"></span>' : ''}
  ${n ? `<span class="absolute -top-[8px] ${n.length > 1 ? 'left-[34px] w-11 text-[17px]' : 'left-[50px] w-7 text-[19px]'} h-7 rounded-full bg-[#f63f39] text-white text-center leading-7 tracking-tight">${n}</span>` : ''}
</div>`;
document.getElementById('dock').innerHTML = apps.map(cell).join('');
document.getElementById('dock2').innerHTML = apps2.map(cell).join('');
</script>
</body>
</html>
